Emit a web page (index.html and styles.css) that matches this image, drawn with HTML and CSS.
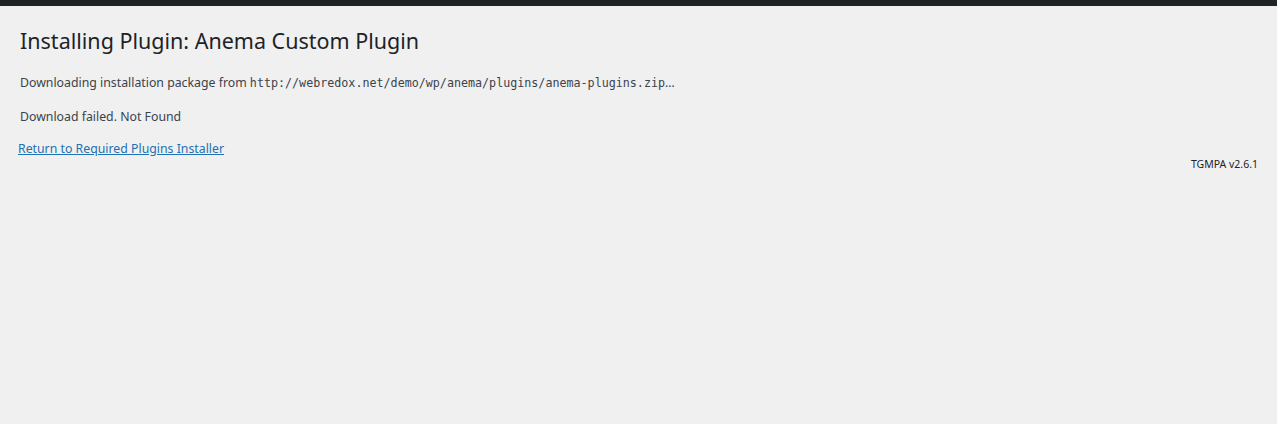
FILE: index.html
```html
<!DOCTYPE html>
<html>
<head>
<meta charset="utf-8">
<link rel="stylesheet" href="styles.css">
</head>
<body>
<div class="adminbar"></div>
<div class="wrap">
  <h1 class="title">Installing Plugin: Anema Custom Plugin</h1>
  <p class="msg">Downloading installation package from <span class="code">http://webredox.net/demo/wp/anema/plugins/anema-plugins.zip</span>&hellip;</p>
  <p class="msg">Download failed. Not Found</p>
  <p class="back"><a href="#">Return to Required Plugins Installer</a></p>
  <p class="version">TGMPA v2.6.1</p>
</div>
</body>
</html>
```
FILE: styles.css
```css
html, body {
  margin: 0;
  padding: 0;
  background: #f0f0f1;
  height: 100%;
}
body {
  font-family: "Noto Sans", "Open Sans", sans-serif;
  font-size: 12.3px;
  line-height: 19.5px;
  color: #3c434a;
}
.adminbar {
  height: 6px;
  background: #1d2327;
}
.wrap {
  padding: 0 19px 0 20px;
}
.title {
  font-size: 21.5px;
  font-weight: 400;
  line-height: 30px;
  color: #1d2327;
  margin: 0;
  padding: 20px 0 4px;
}
.msg {
  margin: 13px 0;
}
.code {
  font-family: "DejaVu Sans Mono", "Liberation Mono", monospace;
  font-size: 11.7px;
}
.back {
  margin: 13px 0 0 -2px;
}
.back a {
  color: #2271b1;
  text-decoration: underline;
}
.version {
  margin: 0;
  text-align: right;
  font-size: 10.5px;
  line-height: 11px;
  color: #1d2327;
}
```
